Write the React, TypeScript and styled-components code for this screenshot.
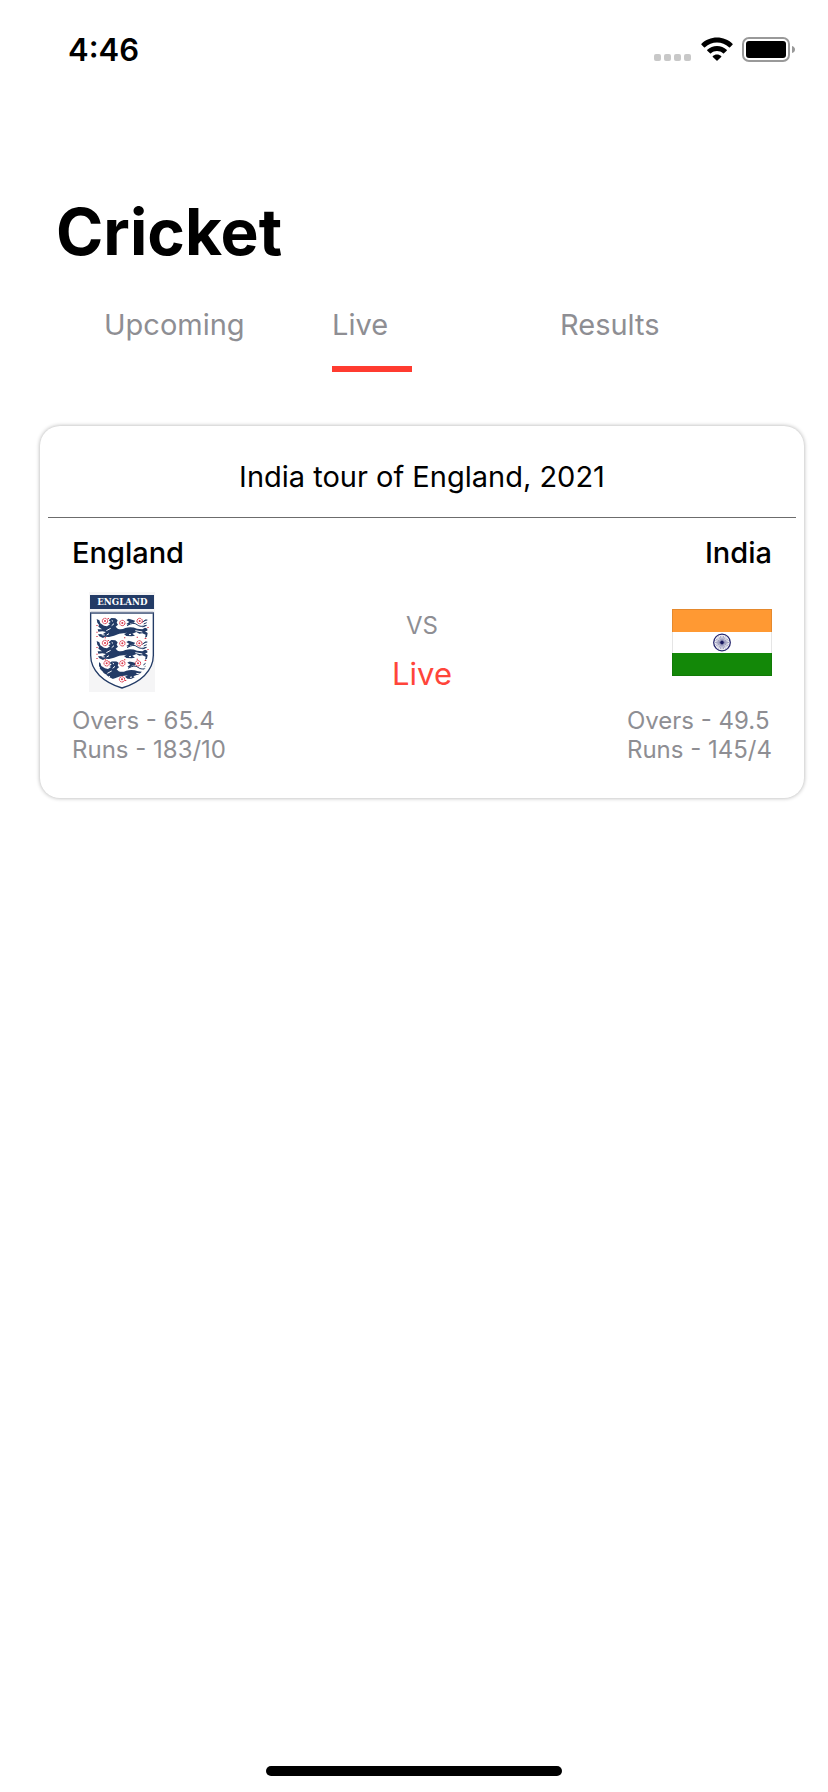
import React from "react";
import styled, { createGlobalStyle } from "styled-components";

const GlobalStyle = createGlobalStyle`
  * { box-sizing: border-box; }
  body {
    margin: 0;
    background: #fff;
    color: #000;
    font-family: Inter, "Liberation Sans", sans-serif;
  }
`;

const Screen = styled.div`
  display: flex;
  flex-direction: column;
  min-height: 100vh;
`;

const StatusBar = styled.header`
  display: flex;
  justify-content: space-between;
  align-items: center;
  height: 100px;
  padding: 0 32px 0 68px;
`;

const Clock = styled.time`
  font-size: 31px;
  line-height: 40px;
  font-weight: 600;
`;

const StatusIcons = styled.div`
  display: flex;
  align-items: center;
  gap: 9px;
`;

const Title = styled.h1`
  margin: 92px 0 0 56px;
  font-size: 64px;
  line-height: 80px;
  font-weight: 700;
`;

const Tabs = styled.nav`
  display: grid;
  grid-template-columns: repeat(3, 1fr);
  margin: 32px 40px 0 104px;
`;

const Tab = styled.button<{ $active?: boolean }>`
  display: flex;
  flex-direction: column;
  align-items: flex-start;
  gap: 20px;
  padding: 0;
  border: 0;
  background: none;
  color: #8e8e93;
  font-family: inherit;
  font-size: 29px;
  line-height: 42px;
  text-align: left;

  &::after {
    content: "";
    width: 80px;
    height: 6px;
    background: ${(p) => (p.$active ? "#ff3b30" : "transparent")};
  }
`;

const MatchCard = styled.article`
  margin: 54px 24px 0 40px;
  padding: 0 8px 34px;
  border-radius: 20px;
  background: #fff;
  box-shadow: 0 0 4px rgba(0, 0, 0, 0.33);
`;

const Series = styled.h2`
  margin: 0;
  padding: 32px 0 22px;
  border-bottom: 1px solid #6c6c6c;
  font-size: 29px;
  line-height: 37px;
  font-weight: 400;
  text-align: center;
`;

const Teams = styled.div`
  display: grid;
  grid-template-columns: 1fr auto 1fr;
  padding: 16px 24px 0;
`;

const Team = styled.section<{ $end?: boolean }>`
  display: flex;
  flex-direction: column;
  align-items: flex-start;
  justify-self: ${(p) => (p.$end ? "end" : "start")};
`;

const TeamName = styled.h3<{ $end?: boolean }>`
  align-self: ${(p) => (p.$end ? "flex-end" : "flex-start")};
  margin: 0;
  font-size: 29px;
  line-height: 38px;
  font-weight: 500;
`;

const Emblem = styled.div<{ $end?: boolean }>`
  display: flex;
  align-self: ${(p) => (p.$end ? "flex-end" : "flex-start")};
  align-items: center;
  justify-content: center;
  width: 100px;
  height: 100px;
  margin: 20px 0 14px;
`;

const Score = styled.p`
  margin: 0;
  color: #8e8e93;
  font-size: 24px;
  line-height: 29px;
`;

const Middle = styled.div`
  display: flex;
  flex-direction: column;
  align-items: center;
  gap: 12px;
  padding-top: 76px;
`;

const Versus = styled.span`
  color: #8e8e93;
  font-size: 24px;
  line-height: 32px;
`;

const State = styled.strong`
  color: #ff453a;
  font-size: 31px;
  line-height: 40px;
  font-weight: 400;
`;

const Footer = styled.footer`
  display: flex;
  justify-content: center;
  margin-top: auto;
  padding-bottom: 16px;
`;

const HomeIndicator = styled.div`
  width: 296px;
  height: 10px;
  border-radius: 5px;
  background: #000;
`;

const SignalDots = () => (
  <svg width="38" height="26" viewBox="0 0 38 26" aria-hidden="true">
    {[0, 10, 20, 30].map((x) => (
      <rect key={x} x={x} y="17" width="7" height="7" rx="2" fill="#c8c8c8" />
    ))}
  </svg>
);

const Wifi = () => (
  <svg width="32" height="26" viewBox="0 0 32 26" aria-hidden="true">
    <path d="M16 0.5C22 .5 27.400 2.800 31.500 6.700Q32 7.200 31.500 7.700L29 10.200Q28.500 10.700 28 10.200C24.700 7.200 20.500 5.500 16 5.500S7.300 7.200 4 10.200Q3.500 10.700 3 10.200L.5 7.700Q0 7.200.5 6.700C4.600 2.800 10 .5 16 .5Z" />
    <path d="M16 9C19.700 9 23.100 10.400 25.700 12.700Q26.200 13.200 25.700 13.700L23 16.300Q22.500 16.700 22 16.300C20.400 14.900 18.300 14 16 14S11.600 14.900 10 16.300Q9.500 16.700 9 16.300L6.300 13.700Q5.800 13.200 6.300 12.700C8.900 10.400 12.300 9 16 9Z" />
    <path d="M16 17.500C17.700 17.500 19.100 18.100 20.200 19Q20.600 19.400 20.200 19.900L16.500 23.600Q16 24 15.500 23.600L11.800 19.900Q11.400 19.400 11.800 19C12.900 18.100 14.300 17.500 16 17.500Z" />
  </svg>
);

const Battery = () => (
  <svg width="54" height="26" viewBox="0 0 54 26" aria-hidden="true">
    <rect x="1" y="1" width="46" height="23" rx="6" fill="#fff" stroke="#999" strokeWidth="2" />
    <rect x="4" y="4" width="40" height="17" rx="3" />
    <path d="M50 9Q53 10 53 12.500T50 16Z" fill="#999" />
  </svg>
);

const Lion = ({ y, x = 0 }: { y: number; x?: number }) => (
  <g transform={`translate(${x} ${y})`} fill="#233b66">
    <path d="M236 61L244 54L256 55L263 61L260 68L264 74L257 80L263 86Q274 90 286 84Q304 79 321 86L337 88L345 83L352 86V92L345 94L353 99L351 110L345 113L347 104L337 100L328 101L319 96L307 101L315 107L304 109L289 108L282 102L291 98L268 101L252 107L237 111L225 110L219 114L208 109L204 103L219 102L228 96L217 94L205 95L203 88L216 88L205 80L207 74L202 68L200 57L208 61L211 70L222 77L231 79L240 73L235 70L242 66Z" />
    <path d="M289 60L296 56L306 59L315 62L312 68L302 69L296 75L289 72L298 66Z" />
    <path d="M291 77Q311 65 321 74T350 76" fill="none" stroke="#233b66" strokeWidth="3" />
    <path d="M337 67L346 60L352 60M341 72L350 68M338 81L348 76" stroke="#233b66" strokeWidth="3" />
    <path d="M245 61L249 64M242 85L229 92M252 71L245 77M230 105L237 101M316 92L337 96M297 104L303 103M215 104L224 105" fill="none" stroke="#fff" strokeWidth="3" />
    <path d="M199 75h4v3h-4zM199 95h4v3h-4zM199 108h4v3h-4zM282 112h4v3h-4zM320 110h4v3h-4zM344 114h5v3h-5zM233 54h4v3h-4zM224 112h4v3h-4zM352 81h4v3h-4z" fill="#d93448" />
  </g>
);

const roses = [
  [225, 63], [277, 69], [329, 63],
  [225, 129], [277, 130], [328, 130],
  [230, 190], [277, 190], [324, 190], [276, 238],
];

const EnglandCrest = () => (
  <svg width="66" height="100" viewBox="177 -24 198 300" role="img" aria-label="England crest">
    <path d="M177-24h198v300H177Z" fill="#f5f5f6" />
    <path d="M180-15h192v42H180Z" fill="#233b66" />
    <text
      x="277"
      y="14"
      textAnchor="middle"
      fill="#fff"
      fontFamily="DejaVu Serif, serif"
      fontSize="26"
      fontWeight="700"
    >
      ENGLAND
    </text>
    <path d="M182 39H370V166C370 213 331 247 276 264C221 247 182 213 182 166Z" fill="#fff" stroke="#233b66" strokeWidth="4" />
    <path d="M182 38H370" stroke="#74819c" strokeWidth="5" />
    <Lion y={0} />
    <Lion y={66} />
    <clipPath id="lower-lion">
      <path d="M207 184H347V203Q321 235 276 247Q231 235 207 203Z" />
    </clipPath>
    <g clipPath="url(#lower-lion)">
      <Lion y={128} x={3} />
    </g>
    {roses.map(([cx, cy]) => (
      <g key={`${cx}-${cy}`}>
        <circle cx={cx} cy={cy} r="8" fill="#fff" stroke="#d93448" strokeWidth="3" strokeDasharray="6 1" />
        <circle cx={cx} cy={cy} r="3" fill="#d93448" />
      </g>
    ))}
  </svg>
);

const IndiaFlag = () => (
  <svg width="100" height="67" viewBox="0 0 100 67" role="img" aria-label="Flag of India">
    <path d="M0 0h100v23H0Z" fill="#ff9933" />
    <path d="M0 23h100v21H0Z" fill="#fff" />
    <path d="M0 44h100v23H0Z" fill="#138808" />
    <path d="M.5 .5h99v66H.5Z" fill="none" stroke="#000" strokeOpacity=".1" />
    <circle cx="50" cy="33.500" r="8.300" fill="#fff" stroke="#28286f" strokeWidth="1.300" />
    {Array.from({ length: 12 }, (_, i) => (
      <path key={i} d="M50 26.500V40.500" stroke="#28286f" strokeWidth=".4" transform={`rotate(${i * 15} 50 33.500)`} />
    ))}
    <circle cx="50" cy="33.500" r="1.700" fill="#18185f" />
  </svg>
);

export default function App() {
  return (
    <Screen>
      <GlobalStyle />
      <StatusBar>
        <Clock>4:46</Clock>
        <StatusIcons>
          <SignalDots />
          <Wifi />
          <Battery />
        </StatusIcons>
      </StatusBar>
      <main>
        <Title>Cricket</Title>
        <Tabs>
          <Tab type="button">Upcoming</Tab>
          <Tab type="button" $active aria-current="page">Live</Tab>
          <Tab type="button">Results</Tab>
        </Tabs>
        <MatchCard>
          <Series>India tour of England, 2021</Series>
          <Teams>
            <Team>
              <TeamName>England</TeamName>
              <Emblem><EnglandCrest /></Emblem>
              <Score>Overs - 65.4</Score>
              <Score>Runs - 183/10</Score>
            </Team>
            <Middle>
              <Versus>VS</Versus>
              <State>Live</State>
            </Middle>
            <Team $end>
              <TeamName $end>India</TeamName>
              <Emblem $end><IndiaFlag /></Emblem>
              <Score>Overs - 49.5</Score>
              <Score>Runs - 145/4</Score>
            </Team>
          </Teams>
        </MatchCard>
      </main>
      <Footer>
        <HomeIndicator />
      </Footer>
    </Screen>
  );
}
